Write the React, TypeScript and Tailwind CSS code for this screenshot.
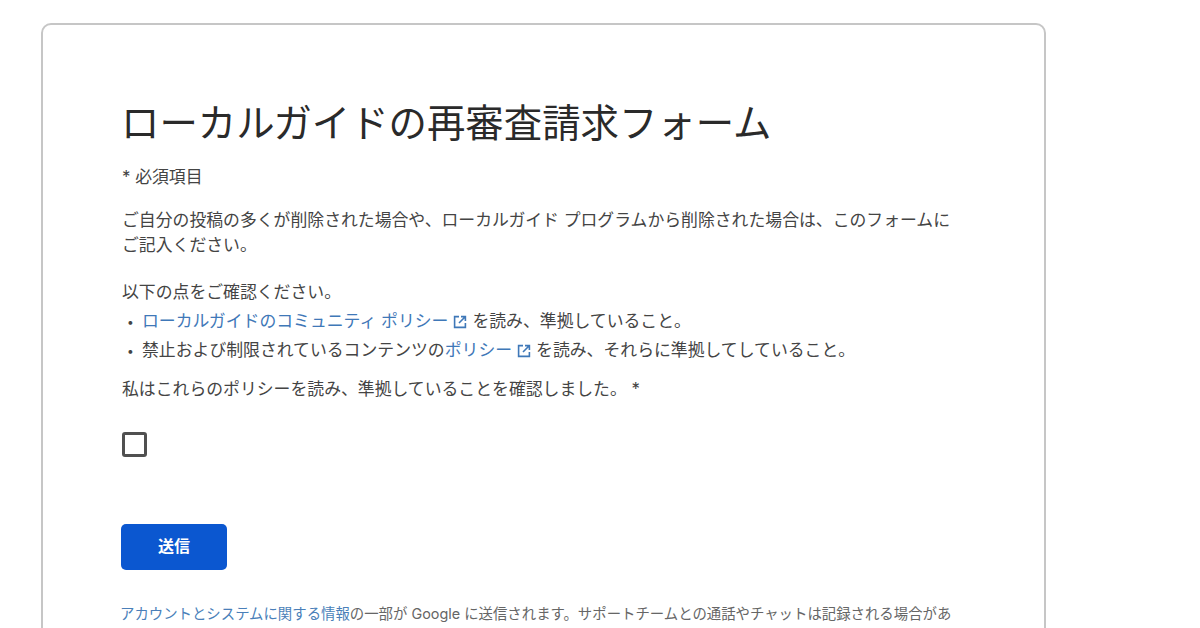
import React from "react";

const ExternalIcon = () => (
  <svg viewBox="0 0 14 14" className="inline-block w-[14px] h-[14px] mx-[5px] align-[-2px]" fill="none" stroke="#3f78b8" strokeWidth="1.6">
    <path d="M6 1.6H1.6v10.8h10.8V8" />
    <path d="M8 1.6h4.4V6M12.2 1.8L6 8" />
  </svg>
);

export default function App() {
  return (
    <div className="w-[1200px] h-[628px] overflow-hidden bg-white font-['Inter','Noto_Sans_CJK_JP',sans-serif] text-[#444444]">
      <div className="ml-[41px] mt-[23px] w-[1005px] h-[700px] border-2 border-[#c6c6c6] rounded-[10px] pl-[79px] pr-[90px] pt-[70px]">
        <h1 className="-ml-[1px] text-[38.4px] leading-[56px] text-[#2a2a2a]">ローカルガイドの再審査請求フォーム</h1>
        <p className="mt-[14px] text-[16.85px] leading-[24px]">* 必須項目</p>
        <p className="mt-[19px] text-[16.85px] leading-[25px] w-[832px]">
          ご自分の投稿の多くが削除された場合や、ローカルガイド プログラムから削除された場合は、このフォームにご記入ください。
        </p>
        <p className="mt-[20px] text-[16.85px] leading-[29px]">以下の点をご確認ください。</p>
        <ul className="text-[16.85px] leading-[29px]">
          <li className="flex">
            <span className="w-[20px] pl-[5px] text-[12px]">•</span>
            <span>
              <span className="text-[#3f78b8]">ローカルガイドのコミュニティ ポリシー</span>
              <ExternalIcon />を読み、準拠していること。
            </span>
          </li>
          <li className="flex">
            <span className="w-[20px] pl-[5px] text-[12px]">•</span>
            <span>
              禁止および制限されているコンテンツの<span className="text-[#3f78b8]">ポリシー</span>
              <ExternalIcon />を読み、それらに準拠してしていること。
            </span>
          </li>
        </ul>
        <p className="mt-[12px] text-[16.85px] leading-[25px]">私はこれらのポリシーを読み、準拠していることを確認しました。 *</p>
        <div className="mt-[30px] w-[25px] h-[25px] border-[3px] border-[#505050] rounded-[3px]" />
        <button className="mt-[67px] -ml-[1px] block w-[106px] h-[46px] pb-[2px] bg-[#0b57d0] rounded-[5px] text-white text-[16px] font-bold">送信</button>
        <p className="mt-[32px] -ml-[2px] text-[14.4px] leading-[24px] whitespace-nowrap text-[#666666]">
          <span className="text-[#4a7fb9]">アカウントとシステムに関する情報</span>の一部が Google に送信されます。サポートチームとの通話やチャットは記録される場合があ
        </p>
      </div>
    </div>
  );
}
